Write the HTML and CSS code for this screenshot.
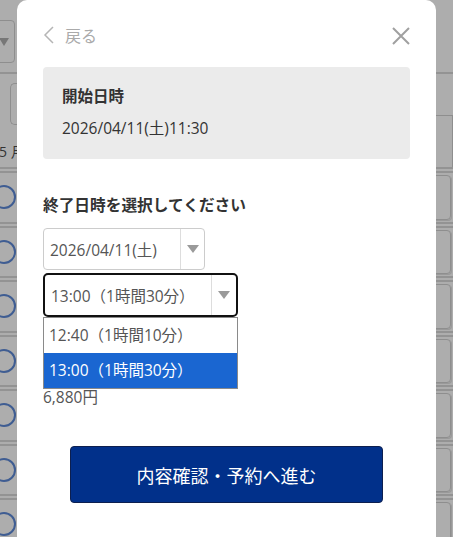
FILE: index.html
```html
<!DOCTYPE html>
<html>
<head>
    <title>予約 - 終了日時</title>
    <link rel="stylesheet" href="styles.css">
</head>
<body>
    <div class="page">
        <div class="page__head">
            <div class="page__select"><span class="page__caret"></span></div>
        </div>
        <div class="page__month">
            <div class="page__monthLeft">
                <div class="page__tab"></div>
                <span class="page__label">5 月</span>
            </div>
            <div class="page__cell page__cell--flat"></div>
        </div>
        <div class="page__row"><span class="page__circle"></span><div class="page__cell"></div></div>
        <div class="page__row"><span class="page__circle"></span><div class="page__cell"></div></div>
        <div class="page__row"><span class="page__circle"></span><div class="page__cell"></div></div>
        <div class="page__row"><span class="page__circle"></span><div class="page__cell"></div></div>
        <div class="page__row"><span class="page__circle"></span><div class="page__cell"></div></div>
        <div class="page__row"><span class="page__circle"></span><div class="page__cell"></div></div>
        <div class="page__row"><span class="page__circle"></span><div class="page__cell"></div></div>
    </div><!-- end page -->

    <div class="modal">
        <div class="modal__head">
            <a href="#" class="modal__back">
                <svg width="12" height="18" viewBox="0 0 12 18"><path d="M10 1 L2 9 L10 17" fill="none" stroke="#b5b5b5" stroke-width="1.5"/></svg>
                <span>戻る</span>
            </a>
            <a href="#" class="modal__close">
                <svg width="20" height="20" viewBox="0 0 20 20"><path d="M2 2 L18 18 M18 2 L2 18" fill="none" stroke="#a0a0a0" stroke-width="2"/></svg>
            </a>
        </div>

        <div class="startBox">
            <div class="startBox__title">開始日時</div>
            <div class="startBox__value">2026/04/11(土)11:30</div>
        </div>

        <div class="endLabel">終了日時を選択してください</div>

        <div class="select select--date">
            <span class="select__text">2026/04/11(土)</span>
            <span class="select__arrow"></span>
        </div>
        <div class="timeWrap">
            <div class="select select--time">
                <span class="select__text">13:00（1時間30分）</span>
                <span class="select__arrow"></span>
            </div>
            <ul class="dropdown">
                <li>12:40（1時間10分）</li>
                <li class="is-selected">13:00（1時間30分）</li>
            </ul>
        </div>

        <div class="price">6,880円</div>

        <div class="actions">
            <a href="#" class="btn-next">内容確認・予約へ進む</a>
        </div>
    </div><!-- end modal -->
</body>
</html>
```

FILE: styles.css
```css
html, body {
    font-family: "Open Sans", "Noto Sans CJK JP", sans-serif;
}

body {
    margin: 0;
    height: 537px;
    overflow: hidden;
    background: #adadad;
}

/* page behind the overlay (already dimmed) */
.page {
    width: 453px;
}

.page__head {
    height: 74px;
    padding-top: 20px;
    box-sizing: border-box;
    border-bottom: 2px solid #939393;
}

.page__select {
    position: relative;
    margin-left: -50px;
    width: 65px;
    height: 43px;
    border: 1px solid #8e8e8e;
    border-radius: 4px;
    box-sizing: border-box;
}

.page__caret {
    position: absolute;
    right: 5px;
    top: 17px;
    border-left: 5px solid transparent;
    border-right: 5px solid transparent;
    border-top: 8px solid #777;
}

.page__month {
    display: flex;
    justify-content: space-between;
    height: 93px;
    border-bottom: 6px double #939393;
}

.page__monthLeft {
    display: flex;
    flex-direction: column;
}

.page__tab {
    margin: 9px 0 0 10px;
    width: 40px;
    height: 40px;
    border: 1px solid #8e8e8e;
    border-right: none;
    border-radius: 5px 0 0 5px;
}

.page__label {
    margin: 16px 0 0 -1px;
    font-size: 14px;
    color: #333;
}

.page__cell {
    margin: 2px 2px 2px 0;
    width: 60px;
    border: 1px solid #8e8e8e;
    border-radius: 4px;
    box-shadow: 1px 1px 0 #999;
}

.page__cell--flat {
    margin: 41px 0 0;
    border-radius: 0;
    border-bottom: none;
    box-shadow: none;
}

.page__row {
    display: flex;
    justify-content: space-between;
    align-items: center;
    height: 48.5px;
    border-bottom: 6px double #939393;
}

.page__row .page__cell {
    align-self: stretch;
}

.page__circle {
    margin-left: -8px;
    width: 20px;
    height: 20px;
    border: 2px solid #3f5d92;
    border-radius: 50%;
}

/* modal */
.modal {
    position: fixed;
    top: 0;
    left: 0;
    right: 0;
    margin: 0 auto;
    width: 419px;
    height: 560px;
    padding: 24px 26px 0;
    box-sizing: border-box;
    background: #fff;
    border-radius: 10px 10px 0 0;
}

.modal__head {
    display: flex;
    justify-content: space-between;
    align-items: center;
    height: 24px;
}

.modal__back {
    display: flex;
    align-items: center;
    gap: 10px;
    margin-top: -2px;
    text-decoration: none;
    color: #aaa;
    font-size: 16px;
}

.modal__close {
    display: flex;
    margin-right: -1px;
    margin-top: -1px;
}

.startBox {
    margin-top: 19px;
    padding: 19px 19px 21px;
    background: #ebebeb;
    border-radius: 4px;
    color: #333;
    font-size: 15.5px;
    line-height: 20px;
}

.startBox__title {
    font-weight: 700;
}

.startBox__value {
    margin-top: 12px;
}

.endLabel {
    margin-top: 35px;
    font-size: 15.7px;
    line-height: 22px;
    font-weight: 700;
    color: #333;
}

.select {
    display: flex;
    align-items: stretch;
    box-sizing: border-box;
    border-radius: 4px;
    color: #555;
    font-size: 15.5px;
}

.select__text {
    flex: 1;
    display: flex;
    align-items: center;
    padding-left: 6px;
}

.select__arrow {
    position: relative;
    width: 23px;
    border-left: 1px solid #ddd;
}

.select__arrow::after {
    content: "";
    position: absolute;
    left: 6px;
    top: 50%;
    margin-top: -4px;
    border-left: 6px solid transparent;
    border-right: 6px solid transparent;
    border-top: 8px solid #9a9a9a;
}

.select--date {
    margin-top: 12px;
    width: 162px;
    height: 42px;
    border: 1px solid #ccc;
}

.timeWrap {
    position: relative;
    margin-top: 3px;
}

.select--time {
    width: 195px;
    height: 44px;
    border: 2px solid #111;
    border-radius: 5px;
}

.select--time .select__arrow {
    width: 24px;
}

.dropdown {
    position: absolute;
    top: 44px;
    left: 0;
    margin: 0;
    padding: 0;
    list-style: none;
    width: 195px;
    box-sizing: border-box;
    border: 1px solid #8a8a8a;
    background: #fff;
    font-size: 15.5px;
    color: #555;
}

.dropdown li {
    height: 35px;
    line-height: 35px;
    padding-left: 5px;
}

.dropdown li.is-selected {
    background: #1a66d1;
    color: #fff;
}

.price {
    margin-top: 70px;
    font-size: 15.5px;
    line-height: 20px;
    color: #555;
}

.actions {
    display: flex;
    justify-content: center;
    margin-top: 39px;
}

.btn-next {
    display: flex;
    align-items: center;
    justify-content: center;
    width: 313px;
    height: 57px;
    box-sizing: border-box;
    background: #01308a;
    border: 1px solid #0d1f4f;
    border-radius: 4px;
    color: #fff;
    font-size: 18px;
    text-decoration: none;
}
```
